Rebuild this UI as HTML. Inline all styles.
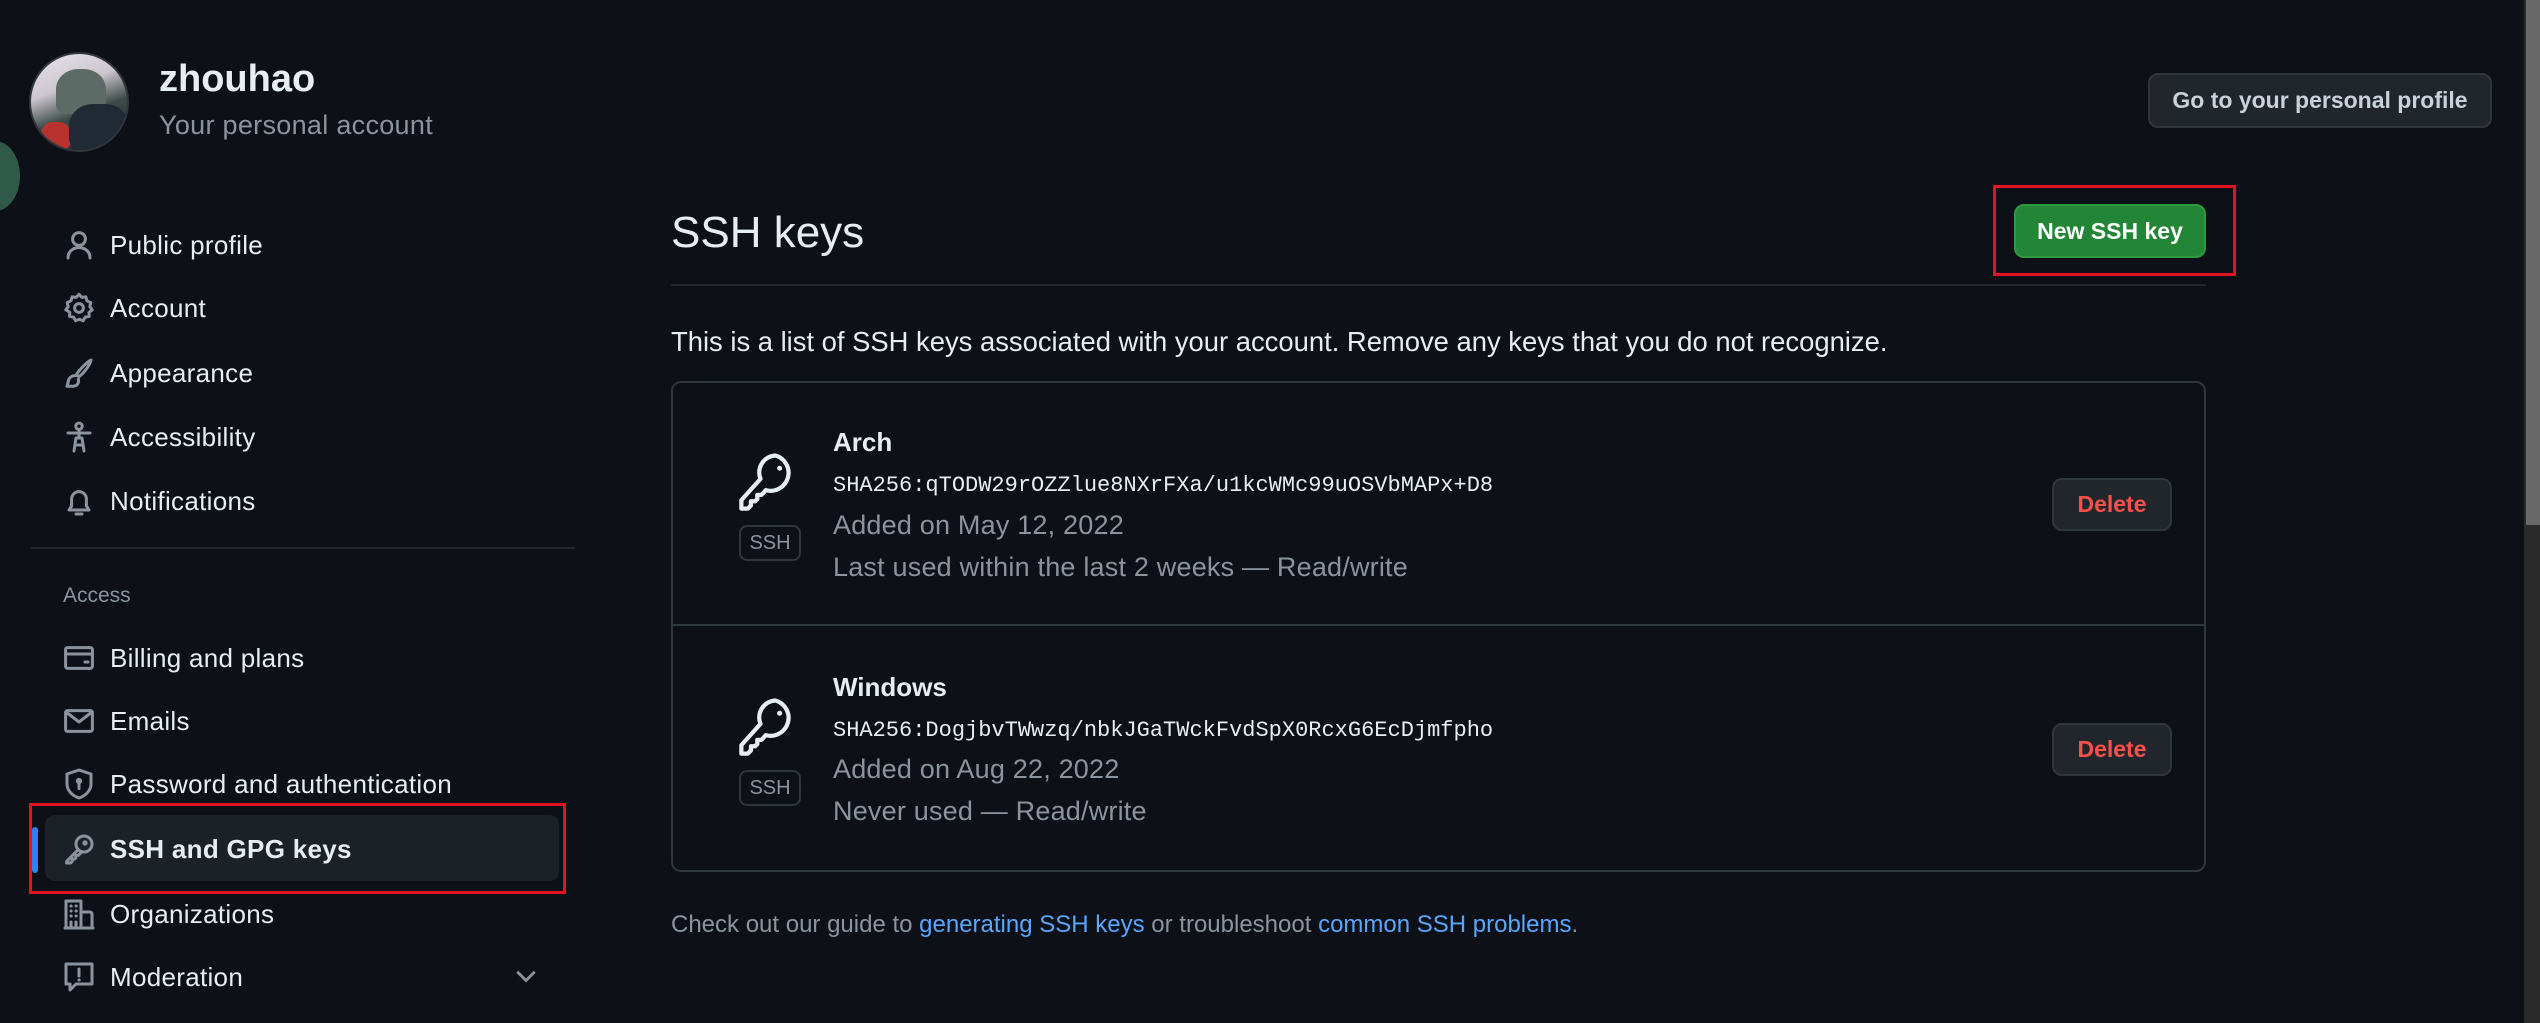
<!DOCTYPE html>
<html><head><meta charset="utf-8"><style>
*{margin:0;padding:0;box-sizing:border-box}
html,body{width:2540px;height:1023px;overflow:hidden;background:#0d1117;font-family:"Liberation Sans",sans-serif;color:#e6edf3}
.a{position:absolute}
.nav{position:absolute;left:63px;font-size:26px;color:#e6edf3;display:flex;align-items:center;height:40px;letter-spacing:0.3px}
.nav svg{width:32px;height:32px;margin-right:15px;fill:none;stroke:#8b949e;stroke-width:1.5;stroke-linecap:round;stroke-linejoin:round}
.mono{font-family:"Liberation Mono",monospace;font-size:22px;color:#e6edf3}
.muted{color:#8b949e;font-size:27px;letter-spacing:0.2px}
.btn{position:absolute;border:2px solid #30363d;background:#21262d;border-radius:10px;display:flex;align-items:center;justify-content:center;font-weight:bold;font-size:23px}
.badge{position:absolute;border:2px solid #30363d;border-radius:8px;color:#8b949e;font-size:20px;display:flex;align-items:center;justify-content:center}
</style></head><body>
<div class="a" style="left:29px;top:52px;width:100px;height:100px;border-radius:50%;overflow:hidden;background:linear-gradient(160deg,#e9e4ea 0%,#cdc6cf 35%,#3b4a47 60%,#1c2230 100%);border:2px solid #30363d">
<div class="a" style="left:25px;top:15px;width:50px;height:45px;border-radius:45% 45% 20% 20%;background:#5c6b66"></div>
<div class="a" style="left:10px;top:68px;width:30px;height:30px;background:#b8322e;border-radius:40%"></div>
<div class="a" style="left:38px;top:50px;width:60px;height:55px;background:#1f2a35;border-radius:40%"></div>
</div>
<div class="a" style="left:-30px;top:141px;width:50px;height:70px;border-radius:50%;background:#2f5a4a"></div>
<div class="a" style="left:159px;top:58px;font-size:38px;font-weight:bold;color:#e6edf3">zhouhao</div>
<div class="a" style="left:159px;top:110px;font-size:27px;color:#8b949e;letter-spacing:0.3px">Your personal account</div>

<div class="nav" style="top:225px"><svg viewBox="0 0 16 16"><circle cx="8" cy="5" r="3.2"/><path d="M2.5 14.5c0-3.2 2.5-5.2 5.5-5.2s5.5 2 5.5 5.2"/></svg>Public profile</div>
<div class="nav" style="top:288px"><svg viewBox="0 0 16 16"><circle cx="8" cy="8" r="2.2"/><path d="M8 1.2l1.4 1.5 2-.3.6 2 1.9.9-.5 2 1.2 1.6-1.6 1.3.1 2-2 .4-1 1.8-1.9-.8-1.9.8-1-1.8-2-.4.1-2L1.4 8.9l1.2-1.6-.5-2 1.9-.9.6-2 2 .3z"/></svg>Account</div>
<div class="nav" style="top:353px"><svg viewBox="0 0 16 16"><path d="M14 1.5c-2 1-5.5 4.5-7.3 7.2l1.2 1.2C10.5 8 13.5 4 14 1.5zM6.2 9.3c-1.8 0-3.2 1-3.5 2.7L2 14.6h3c2 0 3-1.3 2.7-3.5"/></svg>Appearance</div>
<div class="nav" style="top:417px"><svg viewBox="0 0 16 16"><circle cx="8" cy="2.6" r="1.6"/><path d="M2.5 6h11M8 4.5v4M5.5 15l1-6.5h3l1 6.5M6.2 12h3.6"/></svg>Accessibility</div>
<div class="nav" style="top:481px"><svg viewBox="0 0 16 16"><path d="M3 12.5h10l-1.3-2V7a3.7 3.7 0 0 0-7.4 0v3.5zM6.5 14.5h3"/></svg>Notifications</div>
<div class="a" style="left:31px;top:547px;width:544px;height:2px;background:#21262d"></div>
<div class="a" style="left:63px;top:584px;font-size:21px;color:#8b949e">Access</div>
<div class="nav" style="top:638px"><svg viewBox="0 0 16 16"><rect x="1.3" y="2.8" width="13.4" height="10.4" rx="1"/><path d="M1.3 6h13.4M11 10h1.5"/></svg>Billing and plans</div>
<div class="nav" style="top:701px"><svg viewBox="0 0 16 16"><rect x="1.3" y="2.8" width="13.4" height="10.4" rx="1"/><path d="M1.5 3.5L8 8.5l6.5-5"/></svg>Emails</div>
<div class="nav" style="top:764px"><svg viewBox="0 0 16 16"><path d="M8 1l6 2v5c0 3.5-3 6-6 7-3-1-6-3.5-6-7V3z"/><circle cx="8" cy="6.5" r=".8"/><path d="M8 7.3v3"/></svg>Password and authentication</div>
<div class="a" style="left:45px;top:815px;width:514px;height:66px;background:#1c2128;border-radius:10px"></div>
<div class="a" style="left:32px;top:827px;width:6px;height:46px;background:#2f81f7;border-radius:3px"></div>
<div class="nav" style="top:829px;font-weight:bold"><svg viewBox="0 0 16 16"><circle cx="10.5" cy="5.5" r="4"/><circle cx="11" cy="5" r=".6"/><path d="M7.6 8.3L1.8 14.2v.8h2l.8-.8V13h1.3l.5-.5v-1.3h1.3l1.5-1.6"/></svg>SSH and GPG keys</div>
<div class="a" style="left:29px;top:803px;width:537px;height:91px;border:3px solid #e3141f"></div>
<div class="nav" style="top:894px"><svg viewBox="0 0 16 16"><path d="M1.5 15V1.5h7.5V15M9 7h4.5a1 1 0 0 1 1 1v7M1 15h14M4 4h.1M6.5 4h.1M4 6.5h.1M6.5 6.5h.1M4 9h.1M6.5 9h.1M4 12v3M6.5 12v3"/></svg>Organizations</div>
<div class="nav" style="top:957px"><svg viewBox="0 0 16 16"><path d="M1.5 1.5h13v10h-8l-3 3v-3h-2z"/><path d="M8 4v3.5M8 9.5h.1"/></svg>Moderation</div>
<svg class="a" style="left:512px;top:966px" width="28" height="22" viewBox="0 0 16 12" fill="none" stroke="#8b949e" stroke-width="1.6"><path d="M3 3l5 5 5-5"/></svg>

<div class="btn" style="left:2148px;top:73px;width:344px;height:55px;color:#c9d1d9">Go to your personal profile</div>
<div class="a" style="left:671px;top:208px;font-size:44px;color:#e6edf3">SSH keys</div>
<div class="btn" style="left:2014px;top:204px;width:192px;height:54px;background:#238636;border-color:#2e9a40;color:#fff">New SSH key</div>
<div class="a" style="left:1993px;top:185px;width:243px;height:91px;border:3px solid #e3141f"></div>
<div class="a" style="left:671px;top:284px;width:1535px;height:2px;background:#21262d"></div>
<div class="a" style="left:671px;top:326px;font-size:27.4px;color:#e6edf3">This is a list of SSH keys associated with your account. Remove any keys that you do not recognize.</div>
<div class="a" style="left:671px;top:381px;width:1535px;height:491px;border:2px solid #30363d;border-radius:10px"></div>
<div class="a" style="left:673px;top:624px;width:1531px;height:2px;background:#30363d"></div>

<svg class="a" style="left:735px;top:446px" width="68" height="70" viewBox="0 0 32 32" fill="none" stroke="#e6edf3" stroke-width="2" stroke-linejoin="round"><path d="M19 4a8 8 0 0 0-7 11L3 25v4h3l1.5-1.5v-2h2l1-1v-2h2l2-2.2A8 8 0 1 0 19 4z"/><circle cx="21" cy="10" r="1.2" fill="#e6edf3" stroke="none"/></svg>
<div class="badge" style="left:739px;top:525px;width:62px;height:36px">SSH</div>
<div class="a" style="left:833px;top:427px;font-size:26px;font-weight:bold">Arch</div>
<div class="a mono" style="left:833px;top:473px">SHA256:qTODW29rOZZlue8NXrFXa/u1kcWMc99uOSVbMAPx+D8</div>
<div class="a muted" style="left:833px;top:510px">Added on May 12, 2022</div>
<div class="a muted" style="left:833px;top:552px">Last used within the last 2 weeks — Read/write</div>
<div class="btn" style="left:2052px;top:478px;width:120px;height:53px;color:#f85149">Delete</div>

<svg class="a" style="left:735px;top:691px" width="68" height="70" viewBox="0 0 32 32" fill="none" stroke="#e6edf3" stroke-width="2" stroke-linejoin="round"><path d="M19 4a8 8 0 0 0-7 11L3 25v4h3l1.5-1.5v-2h2l1-1v-2h2l2-2.2A8 8 0 1 0 19 4z"/><circle cx="21" cy="10" r="1.2" fill="#e6edf3" stroke="none"/></svg>
<div class="badge" style="left:739px;top:770px;width:62px;height:36px">SSH</div>
<div class="a" style="left:833px;top:672px;font-size:26px;font-weight:bold">Windows</div>
<div class="a mono" style="left:833px;top:718px">SHA256:DogjbvTWwzq/nbkJGaTWckFvdSpX0RcxG6EcDjmfpho</div>
<div class="a muted" style="left:833px;top:754px">Added on Aug 22, 2022</div>
<div class="a muted" style="left:833px;top:796px">Never used — Read/write</div>
<div class="btn" style="left:2052px;top:723px;width:120px;height:53px;color:#f85149">Delete</div>

<div class="a" style="left:671px;top:911px;font-size:24px;color:#8b949e">Check out our guide to <span style="color:#58a6ff">generating SSH keys</span> or troubleshoot <span style="color:#58a6ff">common SSH problems</span>.</div>

<div class="a" style="left:2524px;top:0;width:16px;height:1023px;background:#2b2b2b"></div>
<div class="a" style="left:2526px;top:0;width:14px;height:525px;background:#686868"></div>
</body></html>
